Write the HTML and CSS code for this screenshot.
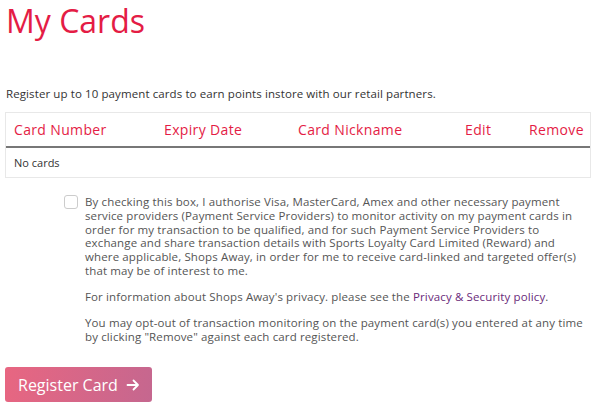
FILE: index.html
```html
<!DOCTYPE html>
<html>
<head>
<meta charset="utf-8">
<link rel="stylesheet" href="styles.css">
</head>
<body>
<div class="page">
  <h1 class="title">My Cards</h1>
  <p class="intro">Register up to 10 payment cards to earn points instore with our retail partners.</p>
  <div class="table">
    <div class="row head">
      <div class="c1">Card Number</div>
      <div class="c2">Expiry Date</div>
      <div class="c3">Card Nickname</div>
      <div class="c4">Edit</div>
      <div class="c5">Remove</div>
    </div>
    <div class="row body">No cards</div>
  </div>
  <div class="consent">
    <span class="box"></span>
    <div class="texts">
      <p class="lines">By checking this box, I authorise Visa, MasterCard, Amex and other necessary payment<br>service providers (Payment Service Providers) to monitor activity on my payment cards in<br>order for my transaction to be qualified, and for such Payment Service Providers to<br>exchange and share transaction details with Sports Loyalty Card Limited (Reward) and<br>where applicable, Shops Away, in order for me to receive card-linked and targeted offer(s)<br>that may be of interest to me.</p>
      <p>For information about Shops Away's privacy. please see the <a class="link">Privacy &amp; Security policy</a>.</p>
      <p>You may opt-out of transaction monitoring on the payment card(s) you entered at any time by clicking "Remove" against each card registered.</p>
    </div>
  </div>
  <button class="btn">Register Card <svg width="14" height="14" viewBox="0 0 14 14"><path d="M1.5 7H12M7.5 2.5L12 7L7.5 11.5" fill="none" stroke="#fff" stroke-width="1.8" stroke-linecap="round" stroke-linejoin="round"/></svg></button>
</div>
</body>
</html>
```

FILE: styles.css
```css
html, body { margin: 0; padding: 0; background: #fff; }
body { font-family: "Open Sans", sans-serif; color: #333; }
.page { padding: 0 9px 0 5px; }
.title { margin: 0; padding: 0 0 0 1px; font-weight: 400; font-size: 32px; line-height: 42px; color: #e41c45; }
.intro { margin: 44px 0 0 1px; font-size: 11.5px; line-height: 16px; color: #333; letter-spacing: 0.1px; }
.table { margin-top: 10px; border: 1px solid #e8e8e8; }
.row { display: flex; align-items: center; }
.head { height: 33px; border-bottom: 2px solid #777; color: #e41c45; font-size: 14px; letter-spacing: 0.35px; }
.head > div { padding-left: 8px; }
.c1 { width: 142px; }
.c2 { width: 126px; }
.c3 { width: 159px; }
.c4 { width: 56px; }
.c5 { flex: 1; }
.body { height: 29px; padding-left: 8px; font-size: 11px; color: #333; }
.consent { display: flex; margin: 17px 0 0 59px; }
.box { flex: none; width: 12px; height: 12px; border: 1px solid #ccc; border-radius: 3px; margin-top: 0; }
.texts { margin-left: 7px; font-size: 11.5px; line-height: 13.8px; color: #555; letter-spacing: 0.13px; }
.texts p { margin: 0 0 12.4px; }
.texts .lines { white-space: nowrap; }
.link { color: #6a2a7a; }
.btn { margin-top: 11px; display: flex; align-items: center; gap: 8px; height: 35px; padding: 0 12px 0 13px; border: 0; border-radius: 3px; background: linear-gradient(100deg, #e86681, #c5678f); color: #fff; font-family: "Open Sans", sans-serif; font-size: 16px; letter-spacing: 0; }
```
